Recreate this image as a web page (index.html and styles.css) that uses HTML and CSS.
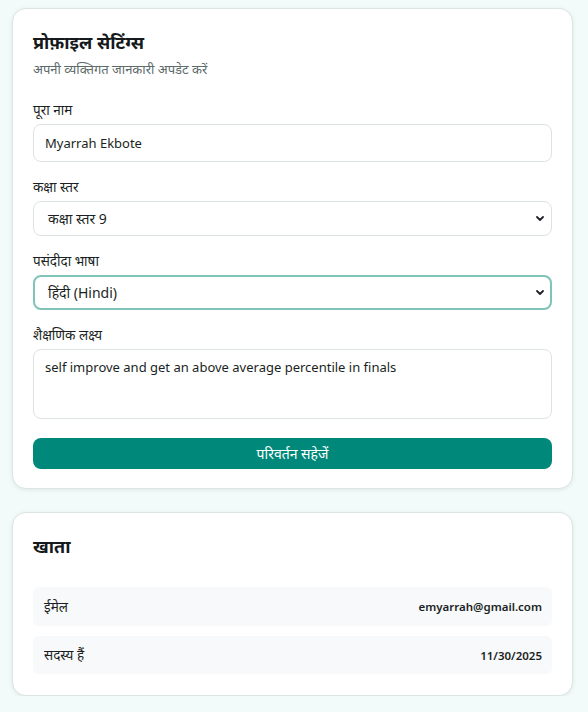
FILE: index.html
```html
<!DOCTYPE html>
<html lang="hi">
<head>
<meta charset="utf-8">
<link rel="stylesheet" href="styles.css">
</head>
<body>
<main class="page">
  <section class="card">
    <h1 class="title">प्रोफ़ाइल सेटिंग्स</h1>
    <p class="subtitle">अपनी व्यक्तिगत जानकारी अपडेट करें</p>
    <div class="field">
      <label class="label">पूरा नाम</label>
      <div class="control input">Myarrah Ekbote</div>
    </div>
    <div class="field">
      <label class="label">कक्षा स्तर</label>
      <div class="control select"><span>कक्षा स्तर 9</span>
        <svg class="chev" viewBox="0 0 8 5" width="8" height="5"><path d="M1 1l3 3 3-3" fill="none" stroke="#1f2328" stroke-width="1.8" stroke-linecap="round" stroke-linejoin="round"/></svg>
      </div>
    </div>
    <div class="field">
      <label class="label">पसंदीदा भाषा</label>
      <div class="control select focus"><span>हिंदी (Hindi)</span>
        <svg class="chev" viewBox="0 0 8 5" width="8" height="5"><path d="M1 1l3 3 3-3" fill="none" stroke="#1f2328" stroke-width="1.8" stroke-linecap="round" stroke-linejoin="round"/></svg>
      </div>
    </div>
    <div class="field">
      <label class="label">शैक्षणिक लक्ष्य</label>
      <div class="control textarea">self improve and get an above average percentile in finals</div>
    </div>
    <button class="btn">परिवर्तन सहेजें</button>
  </section>

  <section class="card account">
    <h2 class="title">खाता</h2>
    <div class="rows">
      <div class="row row1"><span class="k">ईमेल</span><span class="v">emyarrah@gmail.com</span></div>
      <div class="row row2"><span class="k">सदस्य हैं</span><span class="v">11/30/2025</span></div>
    </div>
  </section>
</main>
</body>
</html>
```

FILE: styles.css
```css
* { box-sizing: border-box; }
html, body { margin: 0; padding: 0; }
body {
  background: #f2fbfa;
  font-family: "Noto Sans", "Open Sans", sans-serif;
  color: #1b1f23;
}
.page {
  padding: 8px 15px 0 12px;
  display: flex;
  flex-direction: column;
  gap: 23px;
}
.card {
  background: #fff;
  border: 1px solid #dbe5e4;
  border-radius: 14px;
  box-shadow: 0 1px 4px rgba(0,0,0,0.08);
  padding: 20px 20px 19px 20px;
}
.title {
  margin: 0;
  font-size: 18px;
  line-height: 26px;
  font-weight: 700;
  color: #15191c;
}
.subtitle {
  margin: 4px 0 22px;
  font-size: 13px;
  line-height: 20px;
  color: #5c6a6a;
}
.field { margin-bottom: 16px; }
.label {
  display: block;
  font-size: 13.5px;
  line-height: 18px;
  margin-bottom: 5px;
  color: #1b1f23;
}
.control {
  border: 1px solid #dde3e3;
  border-radius: 8px;
  font-size: 13px;
  color: #1b1f23;
  padding: 0 11px;
  display: flex;
  align-items: center;
}
.input { height: 38px; }
.select { height: 35px; justify-content: space-between; padding-left: 14px; padding-right: 7px; font-size: 14px; }
.select.focus { border: 2px solid #80c3b9; padding-left: 13px; padding-right: 6px; }
.textarea { height: 70px; align-items: flex-start; padding-top: 8px; }
.chev { flex: none; }
.btn {
  display: block;
  width: 100%;
  height: 31px;
  margin-top: 19px;
  border: 0;
  border-radius: 8px;
  background: #00897b;
  color: #fff;
  font-family: inherit;
  font-size: 14px;
}
.account { padding-bottom: 21px; }
.rows {
  margin-top: 28px;
  display: flex;
  flex-direction: column;
  gap: 10px;
}
.row {
  background: #f7f9fa;
  border-radius: 6px;
  display: flex;
  justify-content: space-between;
  align-items: center;
  padding: 0 10px 0 11px;
  font-size: 13.5px;
}
.row1 { height: 39px; }
.row2 { height: 38px; }
.v { font-size: 11.5px; font-weight: 600; }
```
